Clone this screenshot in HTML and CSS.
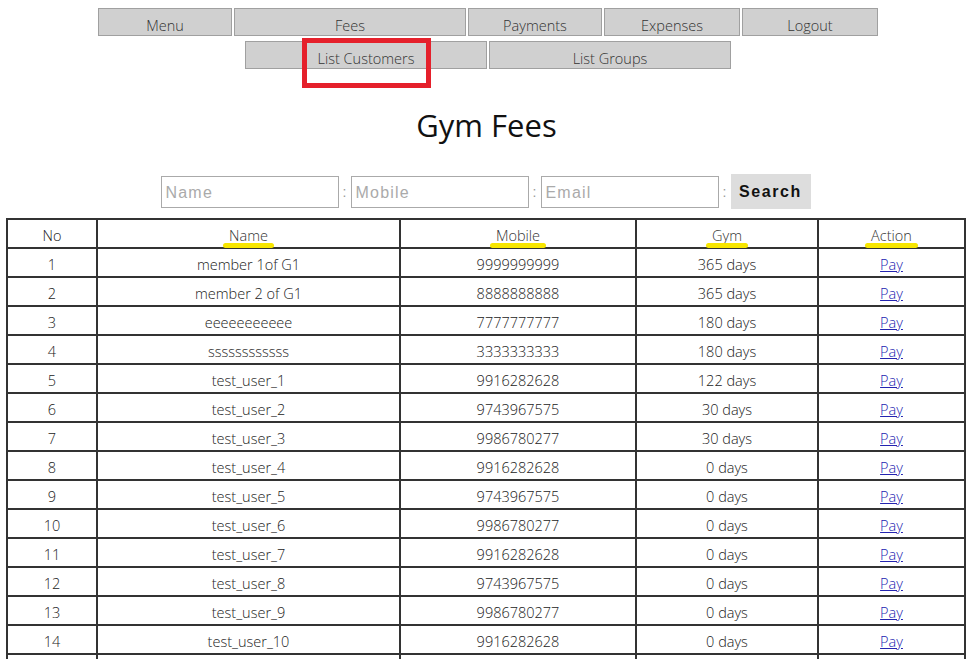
FILE: index.html
```html
<!DOCTYPE html>
<html>
<head>
<meta charset="utf-8">
<title>Gym Fees</title>
<link rel="stylesheet" href="styles.css">
</head>
<body>
<nav class="nav">
  <div class="nav-row">
    <a class="nav-btn w134">Menu</a>
    <a class="nav-btn w232">Fees</a>
    <a class="nav-btn w134">Payments</a>
    <a class="nav-btn w136">Expenses</a>
    <a class="nav-btn w136">Logout</a>
  </div>
  <div class="nav-row">
    <a class="nav-btn w242 marked">List Customers<span class="red-box"></span></a>
    <a class="nav-btn w242">List Groups</a>
  </div>
</nav>
<h1 class="title">Gym Fees</h1>
<form class="search">
  <input class="field" type="text" placeholder="Name"><span class="sep">:</span>
  <input class="field" type="text" placeholder="Mobile"><span class="sep">:</span>
  <input class="field" type="text" placeholder="Email"><span class="sep">:</span>
  <button class="search-btn" type="button">Search</button>
</form>
<table class="grid">
  <thead>
    <tr>
      <th class="c-no">No</th>
      <th class="c-name"><span class="hl">Name</span></th>
      <th class="c-mob"><span class="hl">Mobile</span></th>
      <th class="c-gym"><span class="hl">Gym</span></th>
      <th class="c-act"><span class="hl">Action</span></th>
    </tr>
  </thead>
  <tbody>
    <tr><td>1</td><td>member 1of G1</td><td>9999999999</td><td>365 days</td><td><a href="#">Pay</a></td></tr>
    <tr><td>2</td><td>member 2 of G1</td><td>8888888888</td><td>365 days</td><td><a href="#">Pay</a></td></tr>
    <tr><td>3</td><td>eeeeeeeeeee</td><td>7777777777</td><td>180 days</td><td><a href="#">Pay</a></td></tr>
    <tr><td>4</td><td>ssssssssssss</td><td>3333333333</td><td>180 days</td><td><a href="#">Pay</a></td></tr>
    <tr><td>5</td><td>test_user_1</td><td>9916282628</td><td>122 days</td><td><a href="#">Pay</a></td></tr>
    <tr><td>6</td><td>test_user_2</td><td>9743967575</td><td>30 days</td><td><a href="#">Pay</a></td></tr>
    <tr><td>7</td><td>test_user_3</td><td>9986780277</td><td>30 days</td><td><a href="#">Pay</a></td></tr>
    <tr><td>8</td><td>test_user_4</td><td>9916282628</td><td>0 days</td><td><a href="#">Pay</a></td></tr>
    <tr><td>9</td><td>test_user_5</td><td>9743967575</td><td>0 days</td><td><a href="#">Pay</a></td></tr>
    <tr><td>10</td><td>test_user_6</td><td>9986780277</td><td>0 days</td><td><a href="#">Pay</a></td></tr>
    <tr><td>11</td><td>test_user_7</td><td>9916282628</td><td>0 days</td><td><a href="#">Pay</a></td></tr>
    <tr><td>12</td><td>test_user_8</td><td>9743967575</td><td>0 days</td><td><a href="#">Pay</a></td></tr>
    <tr><td>13</td><td>test_user_9</td><td>9986780277</td><td>0 days</td><td><a href="#">Pay</a></td></tr>
    <tr><td>14</td><td>test_user_10</td><td>9916282628</td><td>0 days</td><td><a href="#">Pay</a></td></tr>
    <tr><td></td><td></td><td></td><td></td><td></td></tr>
  </tbody>
</table>
</body>
</html>
```

FILE: styles.css
```css
html, body {
  margin: 0;
  padding: 0;
  background: #fff;
}
body {
  font-family: "Open Sans", "Noto Sans", sans-serif;
  color: #222;
  overflow: hidden;
}
.nav {
  padding-top: 8px;
  display: flex;
  flex-direction: column;
  align-items: center;
  gap: 5px;
  padding-left: 3px;
}
.nav-row {
  display: flex;
  gap: 2px;
}
.nav-btn {
  box-sizing: border-box;
  height: 28px;
  background: #d0d0d0;
  border: 1px solid #a0a0a0;
  display: flex;
  align-items: center;
  justify-content: center;
  font-size: 14.5px;
  font-weight: 300;
  color: #333;
  padding-top: 6px;
}
.w134 { width: 134px; }
.w136 { width: 136px; }
.w232 { width: 232px; }
.w242 { width: 242px; }
.marked { position: relative; }
.red-box {
  position: absolute;
  left: 56px;
  top: -4px;
  width: 129px;
  height: 50px;
  box-sizing: border-box;
  border: 5px solid #e5202b;
}
.title {
  margin: 36px 0 0;
  text-align: center;
  font-size: 31px;
  font-weight: 400;
  color: #111;
  line-height: 40px;
}
.search {
  margin-top: 29px;
  display: flex;
  justify-content: center;
  align-items: center;
  padding-right: 2px;
}
.field {
  box-sizing: border-box;
  width: 178px;
  height: 32px;
  border: 1px solid #aaa;
  padding: 2px 4px 0;
  font-family: "Liberation Sans", Arial, sans-serif;
  font-size: 16px;
  letter-spacing: 1.2px;
  margin: 0;
}
.field::placeholder { color: #aaa; }
.sep {
  width: 12px;
  text-align: center;
  color: #999;
  font-size: 14px;
  font-family: "Liberation Sans", Arial, sans-serif;
}
.search-btn {
  box-sizing: border-box;
  width: 80px;
  height: 35px;
  border: none;
  background: #dddddd;
  font-family: "Liberation Sans", Arial, sans-serif;
  font-weight: 700;
  font-size: 16px;
  letter-spacing: 1.6px;
  color: #111;
  margin: 0;
  padding: 0;
}
.grid {
  margin: 9px 0 0 6px;
  width: 960px;
  border-collapse: collapse;
  border: 2px solid #333;
  font-size: 14.5px;
  font-weight: 300;
}
.grid th, .grid td {
  border: 2px solid #333;
  height: 23px;
  padding: 4px 2px 0;
  text-align: center;
  font-weight: 300;
  color: #222;
}
.c-no { width: 84px; }
.c-name { width: 297px; }
.c-mob { width: 230px; }
.c-gym { width: 176px; }
.grid a { color: #2323b0; }
.hl {
  position: relative;
  color: #333;
}
.hl::after {
  content: "";
  position: absolute;
  left: -6px;
  right: -6px;
  bottom: -3px;
  height: 5px;
  border-radius: 3px;
  background: #f7e600;
}
```
